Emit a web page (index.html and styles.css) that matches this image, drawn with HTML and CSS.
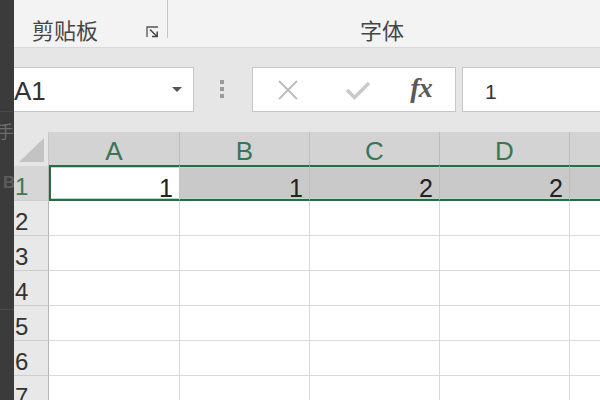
FILE: index.html
```html
<!DOCTYPE html>
<html lang="zh">
<head>
<meta charset="utf-8">
<link rel="stylesheet" href="styles.css">
</head>
<body>
<div class="screen">
  <div class="ribbon">
    <div class="group clip">
      <span class="glabel">剪贴板</span>
      <svg class="launcher" width="13" height="12" viewBox="0 0 13 12">
        <path d="M1 11 V1 H12" fill="none" stroke="#555" stroke-width="1.3"/>
        <path d="M4 3.5 L11 10.5" fill="none" stroke="#444" stroke-width="1.5"/>
        <path d="M6 10.5 H11.2 V5.5" fill="none" stroke="#444" stroke-width="1.5"/>
      </svg>
    </div>
    <div class="group fontgrp"><span class="glabel">字体</span></div>
  </div>

  <div class="fbar">
    <div class="namebox"><span class="ref">A1</span><span class="caret"></span></div>
    <div class="dots"><i></i><i></i><i></i></div>
    <div class="fbtns">
      <span class="fbtn">
        <svg width="22" height="22" viewBox="0 0 22 22"><path d="M2 2 L20 20 M20 2 L2 20" stroke="#bdbdbd" stroke-width="2" fill="none"/></svg>
      </span>
      <span class="fbtn">
        <svg width="26" height="20" viewBox="0 0 26 20"><path d="M2 10 L9.5 17.5 L24 3" stroke="#c9c9c9" stroke-width="3.4" fill="none"/></svg>
      </span>
      <span class="fbtn fx">fx</span>
    </div>
    <div class="fcontent">1</div>
  </div>

  <div class="sheet">
    <div class="corner"><svg width="25" height="24" viewBox="0 0 25 24"><polygon points="25,0 25,24 0,24" fill="#c3c3c3"/></svg></div>
    <div class="colh">A</div>
    <div class="colh">B</div>
    <div class="colh">C</div>
    <div class="colh">D</div>
    <div class="colh"></div>

    <div class="rowh sel">1</div>
    <div class="cell r1 active">1</div>
    <div class="cell r1 hl">1</div>
    <div class="cell r1 hl">2</div>
    <div class="cell r1 hl">2</div>
    <div class="cell r1 hl"></div>

    <div class="rowh">2</div><div class="cell"></div><div class="cell"></div><div class="cell"></div><div class="cell"></div><div class="cell"></div>
    <div class="rowh">3</div><div class="cell"></div><div class="cell"></div><div class="cell"></div><div class="cell"></div><div class="cell"></div>
    <div class="rowh">4</div><div class="cell"></div><div class="cell"></div><div class="cell"></div><div class="cell"></div><div class="cell"></div>
    <div class="rowh">5</div><div class="cell"></div><div class="cell"></div><div class="cell"></div><div class="cell"></div><div class="cell"></div>
    <div class="rowh">6</div><div class="cell"></div><div class="cell"></div><div class="cell"></div><div class="cell"></div><div class="cell"></div>
    <div class="rowh">7</div><div class="cell"></div><div class="cell"></div><div class="cell"></div><div class="cell"></div><div class="cell"></div>
  </div>

  <div class="strip">
    <div class="strip-line l1"></div>
    <span class="ghost g1">手</span>
    <span class="ghost g2">B</span>
    <div class="strip-line l2"></div>
  </div>
</div>
</body>
</html>
```

FILE: styles.css
```css
html, body {
  margin: 0;
  padding: 0;
}
body {
  width: 600px;
  height: 400px;
  overflow: hidden;
  background: #ffffff;
  font-family: "Liberation Sans", "Noto Sans CJK SC", sans-serif;
}
.screen {
  position: relative;
  width: 600px;
  height: 400px;
  overflow: hidden;
  display: flex;
  flex-direction: column;
}

/* ribbon */
.ribbon {
  height: 47px;
  flex: none;
  background: #f3f3f3;
  border-bottom: 1px solid #d9d9d9;
  display: flex;
  align-items: flex-start;
}
.group {
  height: 38px;
  display: flex;
  align-items: flex-start;
}
.glabel {
  margin-top: 18px;
  font-family: "Noto Sans CJK SC", "Liberation Sans", sans-serif;
  font-size: 22px;
  line-height: 22px;
  color: #454545;
}
.clip {
  width: 168px;
  box-sizing: border-box;
  padding-left: 32px;
  border-right: 1px solid #c4c4c4;
}
.launcher {
  margin-left: auto;
  margin-right: 8px;
  margin-top: 26px;
}
.fontgrp {
  padding-left: 192px;
}

/* formula bar */
.fbar {
  height: 84px;
  flex: none;
  box-sizing: border-box;
  background: #e6e6e6;
  padding: 19px 0 0 8px;
  display: flex;
  align-items: flex-start;
}
.namebox {
  width: 186px;
  height: 45px;
  box-sizing: border-box;
  background: #fff;
  border: 1px solid #c6c6c6;
  display: flex;
  align-items: center;
  padding: 3px 0 0 5px;
}
.ref {
  font-size: 26px;
  line-height: 26px;
  color: #333;
}
.caret {
  margin-left: auto;
  margin-right: 11px;
  margin-top: -3px;
  width: 0;
  height: 0;
  border-left: 5px solid transparent;
  border-right: 5px solid transparent;
  border-top: 5px solid #555;
}
.dots {
  width: 4px;
  margin: 13px 28px 0 26px;
  display: flex;
  flex-direction: column;
  gap: 3px;
}
.dots i {
  display: block;
  width: 4px;
  height: 4px;
  background: #9c9c9c;
}
.fbtns {
  width: 204px;
  height: 45px;
  box-sizing: border-box;
  background: #fff;
  border: 1px solid #c6c6c6;
  display: flex;
  align-items: center;
}
.fbtn {
  display: flex;
  align-items: center;
  justify-content: center;
  width: 70px;
  height: 43px;
}
.fbtn.fx {
  width: 60px;
  font-family: "Liberation Serif", serif;
  font-style: italic;
  font-weight: bold;
  font-size: 28px;
  color: #5a5a5a;
  letter-spacing: -1px;
  padding: 0 4px 3px 0;
  box-sizing: border-box;
}
.fcontent {
  flex: 1;
  height: 45px;
  box-sizing: border-box;
  margin-left: 6px;
  background: #fff;
  border: 1px solid #c6c6c6;
  border-right: none;
  padding: 3px 0 0 22px;
  display: flex;
  align-items: center;
  font-size: 21px;
  line-height: 21px;
  color: #333;
}

/* sheet */
.sheet {
  flex: 1;
  display: grid;
  grid-template-columns: 49px 131px 130px 130px 130px 130px;
  grid-template-rows: 34px repeat(7, 35px);
  background: #fff;
}
.corner {
  background: #e6e6e6;
  border-right: 1px solid #c8c8c8;
  display: flex;
  align-items: flex-end;
  justify-content: flex-end;
  padding: 0 4px 4px 0;
}
.colh {
  background: #d3d3d3;
  border-right: 1px solid #bdbdbd;
  display: flex;
  align-items: flex-end;
  justify-content: center;
  padding-bottom: 2px;
  font-size: 26px;
  line-height: 26px;
  color: #3a7556;
}
.rowh {
  background: #e8e8e8;
  border-right: 1px solid #b5b5b5;
  border-bottom: 1px solid #cdcdcd;
  display: flex;
  align-items: flex-end;
  padding: 0 0 1px 15px;
  font-size: 24px;
  line-height: 24px;
  color: #333;
}
.rowh.sel {
  background: #d6d6d6;
  color: #3d7a58;
}
.cell {
  border-right: 1px solid #d9d9d9;
  border-bottom: 1px solid #d9d9d9;
  display: flex;
  align-items: flex-end;
  justify-content: flex-end;
  padding-right: 6px;
  font-size: 25px;
  line-height: 22px;
  color: #222;
}
.cell.r1 {
  border-top: 2px solid #2a6a45;
  border-bottom: 2px solid #2a6a45;
  margin-top: -1px;
  box-shadow: inset 0 1px 0 #b7dcc3, inset 0 -1px 0 #b7dcc3;
}
.cell.hl {
  background: #c9c9c9;
  border-right-color: #bdbdbd;
}
.cell.active {
  background: #fff;
  border-left: 2px solid #2a6a45;
  border-right-color: #c9c9c9;
}

/* overlapping dark strip (foreground window edge) */
.strip {
  position: absolute;
  left: 0;
  top: 0;
  width: 14px;
  height: 400px;
  background: #3b3b3b;
  overflow: hidden;
}
.strip-line {
  position: absolute;
  left: 0;
  width: 14px;
  height: 1px;
  background: #4a4a4a;
}
.strip-line.l1 { top: 111px; }
.strip-line.l2 { top: 309px; }
.ghost {
  position: absolute;
  font-family: "Noto Sans CJK SC", "Liberation Sans", sans-serif;
  color: #6c6c6c;
}
.ghost.g1 {
  left: -3px;
  top: 121px;
  font-size: 17px;
  line-height: 20px;
}
.ghost.g2 {
  left: 3px;
  top: 174px;
  font-family: "Liberation Sans", sans-serif;
  font-weight: bold;
  font-size: 17px;
  line-height: 17px;
  color: #5c5c5c;
}
```
